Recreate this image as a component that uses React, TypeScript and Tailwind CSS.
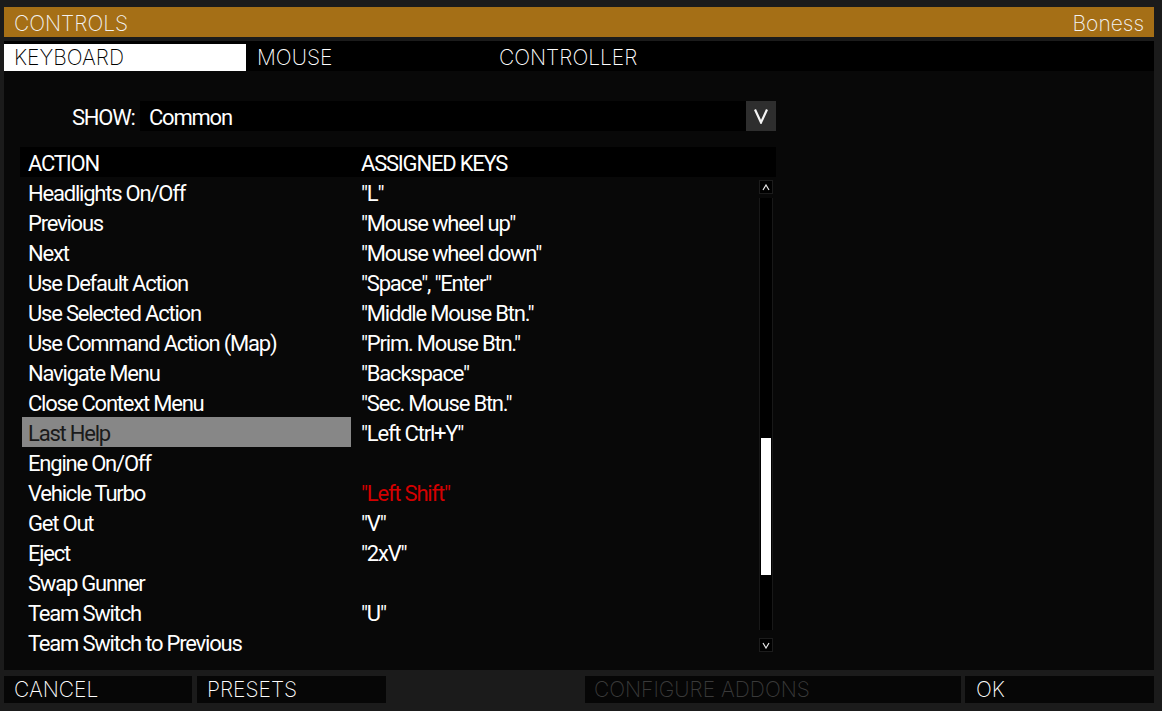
import React from "react";

const rows: { a: string; k: string; red?: boolean; sel?: boolean }[] = [
  { a: "Headlights On/Off", k: '"L"' },
  { a: "Previous", k: '"Mouse wheel up"' },
  { a: "Next", k: '"Mouse wheel down"' },
  { a: "Use Default Action", k: '"Space", "Enter"' },
  { a: "Use Selected Action", k: '"Middle Mouse Btn."' },
  { a: "Use Command Action (Map)", k: '"Prim. Mouse Btn."' },
  { a: "Navigate Menu", k: '"Backspace"' },
  { a: "Close Context Menu", k: '"Sec. Mouse Btn."' },
  { a: "Last Help", k: '"Left Ctrl+Y"', sel: true },
  { a: "Engine On/Off", k: "" },
  { a: "Vehicle Turbo", k: '"Left Shift"', red: true },
  { a: "Get Out", k: '"V"' },
  { a: "Eject", k: '"2xV"' },
  { a: "Swap Gunner", k: "" },
  { a: "Team Switch", k: '"U"' },
  { a: "Team Switch to Previous", k: "" },
];

const thin = "font-['Inter',sans-serif] font-extralight text-[21px] pt-[3px]";
const body = "font-['Roboto',sans-serif] font-normal text-[22px] tracking-[-0.055em]";

export default function App() {
  return (
    <div className="w-[1162px] h-[711px] bg-[#1b1b1b] pl-[4px] pr-[8px] pt-[7px] flex flex-col overflow-hidden">
      {/* Title bar */}
      <div className={`h-[30px] bg-[#a56f16] flex items-center justify-between px-[10px] text-[#f2f2f2] ${thin}`}>
        <span>CONTROLS</span>
        <span>Boness</span>
      </div>
      {/* Tabs */}
      <div className={`mt-[4px] h-[30px] bg-black flex ${thin}`}>
        <div className="w-[242px] bg-white text-black flex items-center pl-[10px]">KEYBOARD</div>
        <div className="w-[242px] text-white flex items-center pl-[11px]">MOUSE</div>
        <div className="w-[242px] text-white flex items-center pl-[11px]">CONTROLLER</div>
      </div>
      {/* Main panel */}
      <div className="h-[599px] bg-[#080808] flex flex-col pt-[30px]">
        {/* Show row */}
        <div className={`h-[30px] flex items-center text-white ${body}`}>
          <span className="w-[136px] pl-[68px] pt-[3px]">SHOW:</span>
          <div className="w-[606px] h-[30px] bg-black flex items-center pl-[9px] pt-[3px]">Common</div>
          <div className="w-[30px] h-[30px] bg-[#2e2e2e] flex items-center justify-center">
            <svg width="16" height="16" viewBox="0 0 16 16">
              <polyline points="2,1.5 8,14.5 14,1.5" fill="none" stroke="#f4f4f4" strokeWidth="2.2" />
            </svg>
          </div>
        </div>
        {/* Table */}
        <div className="mt-[16px] ml-[16px] w-[756px] flex flex-col">
          <div className={`h-[30px] bg-black flex items-center pt-[3px] text-white ${body}`}>
            <span className="w-[333px] pl-[8px]">ACTION</span>
            <span className="pl-[8px]">ASSIGNED KEYS</span>
          </div>
          <div className="flex">
            <div className="w-[739px] flex flex-col">
              {rows.map((r, i) => (
                <div key={i} className={`h-[30px] flex items-center ${body}`}>
                  <div
                    className={`w-[329px] ml-[2px] h-[30px] flex items-center pl-[6px] pt-[3px] ${
                      r.sel ? "bg-[#878787] text-[#1a1a1a]" : "text-white"
                    }`}
                  >
                    {r.a}
                  </div>
                  <div className={`pl-[10px] pt-[3px] ${r.red ? "text-[#d40000]" : "text-white"}`}>{r.k}</div>
                </div>
              ))}
            </div>
            {/* Scrollbar */}
            <div className="w-[14px] flex flex-col pt-[3px]">
              <div className="h-[14px] border border-[#1c1c1c] bg-black flex items-center justify-center">
                <svg width="8" height="7" viewBox="0 0 8 7">
                  <polyline points="1,6 4,1 7,6" fill="none" stroke="#e8e8e8" strokeWidth="1.2" />
                </svg>
              </div>
              <div className="mt-[4px] h-[432px] border-x border-[#181818] bg-black flex flex-col pt-[240px] px-[1px]">
                <div className="h-[137px] bg-white" />
              </div>
              <div className="mt-[8px] h-[14px] border border-[#1c1c1c] bg-black flex items-center justify-center">
                <svg width="8" height="7" viewBox="0 0 8 7">
                  <polyline points="1,1 4,6 7,1" fill="none" stroke="#e8e8e8" strokeWidth="1.2" />
                </svg>
              </div>
            </div>
          </div>
        </div>
      </div>
      {/* Bottom buttons */}
      <div className={`mt-[3px] h-[30px] flex ${thin}`}>
        <div className="w-[188px] bg-[#060606] text-white flex items-center pl-[10px]">CANCEL</div>
        <div className="ml-[5px] w-[189px] bg-[#060606] text-white flex items-center pl-[10px]">PRESETS</div>
        <div className="flex-1" />
        <div className="w-[376px] bg-[#060606] text-[#3a3a3a] flex items-center pl-[9px]">CONFIGURE ADDONS</div>
        <div className="ml-[4px] w-[189px] bg-[#060606] text-white flex items-center pl-[11px]">OK</div>
      </div>
    </div>
  );
}
